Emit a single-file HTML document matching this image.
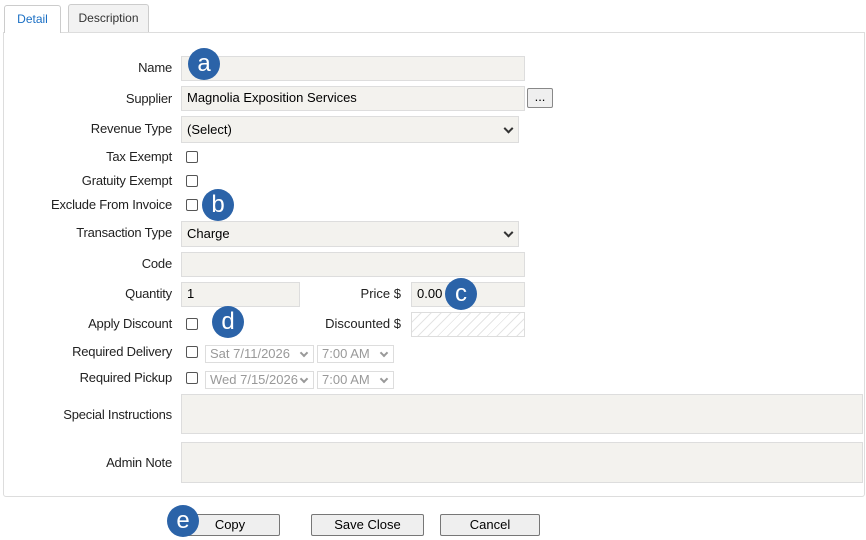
<!DOCTYPE html>
<html><head><style>
body{margin:0;width:866px;height:540px;background:#fff;font-family:"Liberation Sans",Arial,sans-serif;font-size:13px;color:#222;position:relative;overflow:hidden}
.a{position:absolute}
.lbl{position:absolute;right:694px;text-align:right;white-space:nowrap;letter-spacing:-0.2px}
.in{position:absolute;background:#f3f2ee;border:1px solid #ddd;box-sizing:border-box;padding-left:5px;line-height:22px;color:#000;font-size:13px}
.cb{position:absolute;width:12px;height:12px;border:1px solid #555;border-radius:2px;background:#fff;box-sizing:border-box}
.sel::after{content:"";position:absolute;right:6px;top:50%;width:5px;height:5px;border-right:2px solid #333;border-bottom:2px solid #333;transform:translateY(-70%) rotate(45deg)}
.ds{position:absolute;border:1px solid #ddd;box-sizing:border-box;color:#999;font-size:13px;padding-left:4px;line-height:16px;background:#fff}
.ds::after{content:"";position:absolute;right:6px;top:4px;width:4px;height:4px;border-right:2px solid #999;border-bottom:2px solid #999;transform:rotate(45deg)}
.c{position:absolute;width:32px;height:32px;border-radius:50%;background:#2b63a8;color:#fff;font-size:24px;text-align:center;line-height:32px}
.btn{position:absolute;height:22px;border:1px solid #777;border-radius:2px;background:#efefef;box-sizing:border-box;text-align:center;line-height:20px;font-size:13px;color:#000}
</style></head><body>
<div class="a" style="left:3px;top:32px;width:862px;height:465px;border:1px solid #ddd;box-sizing:border-box;border-radius:0 0 3px 3px"></div>
<div class="a" style="left:4px;top:5px;width:57px;height:28px;border:1px solid #ccc;border-bottom:none;background:#fff;box-sizing:border-box;border-radius:3px 3px 0 0;color:#1a6fc4;text-align:center;line-height:26px;font-size:12px">Detail</div>
<div class="a" style="left:68px;top:4px;width:81px;height:28px;border:1px solid #ccc;border-bottom:none;background:#f2f2f2;box-sizing:border-box;border-radius:3px 3px 0 0;color:#333;text-align:center;line-height:26px;font-size:12px">Description</div>

<div class="lbl" style="top:60px">Name</div><div class="in" style="left:181px;top:56px;width:344px;height:25px"></div>
<div class="lbl" style="top:91px">Supplier</div><div class="in" style="left:181px;top:86px;width:344px;height:25px">Magnolia Exposition Services</div>
<div class="btn" style="left:527px;top:88px;width:26px;height:20px;line-height:16px;border-color:#888">...</div>
<div class="lbl" style="top:121px">Revenue Type</div><div class="in sel" style="left:181px;top:116px;width:338px;height:27px;line-height:25px">(Select)</div>
<div class="lbl" style="top:149px">Tax Exempt</div><div class="cb" style="left:186px;top:151px"></div>
<div class="lbl" style="top:173px">Gratuity Exempt</div><div class="cb" style="left:186px;top:175px"></div>
<div class="lbl" style="top:197px">Exclude From Invoice</div><div class="cb" style="left:186px;top:199px"></div>
<div class="lbl" style="top:225px">Transaction Type</div><div class="in sel" style="left:181px;top:221px;width:338px;height:26px;line-height:24px">Charge</div>
<div class="lbl" style="top:256px">Code</div><div class="in" style="left:181px;top:252px;width:344px;height:25px"></div>
<div class="lbl" style="top:286px">Quantity</div><div class="in" style="left:181px;top:282px;width:119px;height:25px">1</div>
<div class="a" style="left:330px;top:286px;width:71px;text-align:right">Price $</div><div class="in" style="left:411px;top:282px;width:114px;height:25px">0.00</div>
<div class="lbl" style="top:316px">Apply Discount</div><div class="cb" style="left:186px;top:318px"></div>
<div class="a" style="left:300px;top:316px;width:101px;text-align:right">Discounted $</div>
<div class="a" style="left:411px;top:312px;width:114px;height:25px;border:1px solid #ddd;box-sizing:border-box;background:repeating-linear-gradient(135deg,#fff 0 6px,#e4e4e4 6px 7px)"></div>
<div class="lbl" style="top:344px">Required Delivery</div><div class="cb" style="left:186px;top:346px"></div>
<div class="ds" style="left:205px;top:345px;width:109px;height:18px">Sat 7/11/2026</div><div class="ds" style="left:317px;top:345px;width:77px;height:18px">7:00 AM</div>
<div class="lbl" style="top:370px">Required Pickup</div><div class="cb" style="left:186px;top:372px"></div>
<div class="ds" style="left:205px;top:371px;width:109px;height:18px">Wed 7/15/2026</div><div class="ds" style="left:317px;top:371px;width:77px;height:18px">7:00 AM</div>
<div class="lbl" style="top:407px">Special Instructions</div><div class="in" style="left:181px;top:394px;width:682px;height:40px"></div>
<div class="lbl" style="top:455px">Admin Note</div><div class="in" style="left:181px;top:442px;width:682px;height:41px"></div>

<div class="btn" style="left:180px;top:514px;width:100px">Copy</div>
<div class="btn" style="left:311px;top:514px;width:113px">Save Close</div>
<div class="btn" style="left:440px;top:514px;width:100px">Cancel</div>

<div class="c" style="left:188px;top:48px">a</div>
<div class="c" style="left:202px;top:189px">b</div>
<div class="c" style="left:445px;top:278px">c</div>
<div class="c" style="left:212px;top:306px">d</div>
<div class="c" style="left:167px;top:505px">e</div>
</body></html>
